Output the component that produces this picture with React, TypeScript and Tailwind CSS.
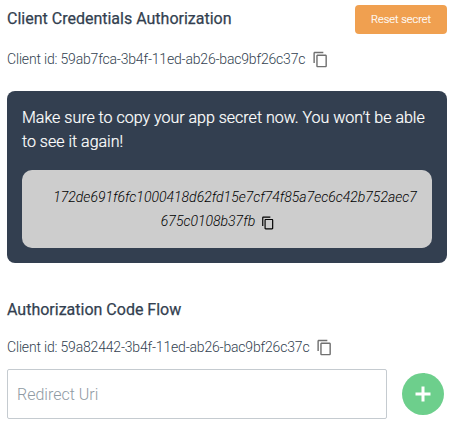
import { MdContentCopy } from "react-icons/md";

function ClientId({ id }: { id: string }) {
  return (
    <div className="flex items-center h-6 text-sm font-light tracking-[-0.18px] text-[#333f50]">
      <span className="whitespace-nowrap">Client id: {id}</span>
      <button className="ml-[7px] pt-px" aria-label="Copy client id">
        <MdContentCopy className="size-[17px] text-[#707070]" />
      </button>
    </div>
  );
}

export default function App() {
  return (
    <main className="w-[455px] h-[437px] overflow-hidden bg-white pl-[7px] pr-2 pt-[5px] font-['Roboto',sans-serif] text-[#333f50]">
      <header className="flex justify-between h-[29px]">
        <h2 className="text-base leading-[27px] font-[450] [-webkit-text-stroke:0.25px]">
          Client Credentials Authorization
        </h2>
        <button className="w-[92px] h-[29px] rounded bg-[#f0a050] pt-px text-[11px] font-[350] text-white [-webkit-text-stroke:0.2px]">
          Reset secret
        </button>
      </header>
      <div className="mt-[13px]">
        <ClientId id="59ab7fca-3b4f-11ed-ab26-bac9bf26c37c" />
      </div>

      <section className="mt-5 h-[172px] rounded-lg bg-[#333f50] p-[15px]">
        <p className="text-base font-[350] text-white [-webkit-text-stroke:0.2px]">
          Make sure to copy your app secret now. You won’t be able
          <br />
          to see it again!
        </p>
        <div className="mt-4 h-[78px] rounded-[10px] bg-[#cdcdcd] pt-[15px] pl-[30px] pr-[14px] text-center text-sm leading-6 font-light italic text-black">
          172de691f6fc1000418d62fd15e7cf74f85a7ec6c42b752aec7
          <br />
          675c0108b37fb
          <MdContentCopy className="mt-0.5 ml-1.5 mr-[34px] inline size-[14px]" />
        </div>
      </section>

      <h2 className="mt-[35px] text-base leading-6 font-[450] [-webkit-text-stroke:0.25px]">
        Authorization Code Flow
      </h2>
      <div className="mt-[13px]">
        <ClientId id="59a82442-3b4f-11ed-ab26-bac9bf26c37c" />
      </div>
      <div className="mt-[10px] flex items-center">
        <input
          className="w-[380px] h-[50px] rounded-xs border border-[#c5cbd0] px-[9px] text-base font-light placeholder:text-[#8f9aa3] outline-none"
          placeholder="Redirect Uri"
        />
        <button
          className="ml-[15px] flex size-[42px] items-center justify-center rounded-full bg-[#6dcf8c] text-white"
          aria-label="Add redirect uri"
        >
          <svg
            className="size-4"
            viewBox="0 0 16 16"
            fill="none"
            stroke="currentColor"
            strokeWidth="3"
          >
            <path d="M8 .5v15M.5 8h15" />
          </svg>
        </button>
      </div>
    </main>
  );
}
